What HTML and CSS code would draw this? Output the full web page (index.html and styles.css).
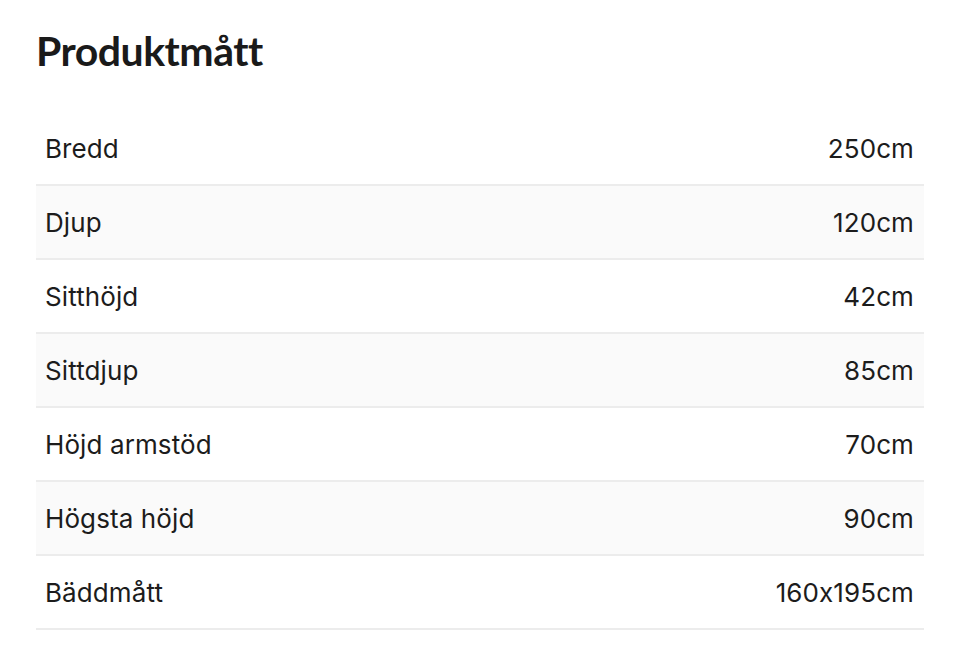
FILE: index.html
```html
<!DOCTYPE html>
<html lang="sv">
<head>
<meta charset="utf-8">
<title>Produktmått</title>
<link rel="stylesheet" href="styles.css">
</head>
<body>
<section class="specs">
  <h2 class="specs-title">Produktmått</h2>
  <table class="specs-table">
    <tbody>
      <tr><td>Bredd</td><td class="val">250cm</td></tr>
      <tr><td>Djup</td><td class="val">120cm</td></tr>
      <tr><td>Sitthöjd</td><td class="val">42cm</td></tr>
      <tr><td>Sittdjup</td><td class="val">85cm</td></tr>
      <tr><td>Höjd armstöd</td><td class="val">70cm</td></tr>
      <tr><td>Högsta höjd</td><td class="val">90cm</td></tr>
      <tr><td>Bäddmått</td><td class="val">160x195cm</td></tr>
    </tbody>
  </table>
</section>
</body>
</html>
```
FILE: styles.css
```css
html, body {
  margin: 0;
  padding: 0;
  background: #ffffff;
}
body {
  color: #1c1c1c;
  font-family: Inter, "Noto Sans", sans-serif;
  font-feature-settings: "calt" 0;
}
.specs {
  padding: 24px 36px 0 36px;
}
.specs-title {
  margin: 0 0 33px 0;
  font-family: Lato, "Noto Sans", sans-serif;
  font-weight: 700;
  font-size: 41px;
  line-height: 54px;
  letter-spacing: -0.5px;
  color: #1a1a1a;
}
.specs-table {
  width: 100%;
  border-collapse: collapse;
}
.specs-table td {
  height: 74px;
  padding: 1px 10px 0 9px;
  font-size: 26px;
  font-weight: 400;
  letter-spacing: 0.1px;
  border-bottom: 2px solid #ececec;
  vertical-align: middle;
  box-sizing: border-box;
}
.specs-table tr:nth-child(even) td {
  background: #fafafa;
}
.specs-table td.val {
  text-align: right;
}
```
